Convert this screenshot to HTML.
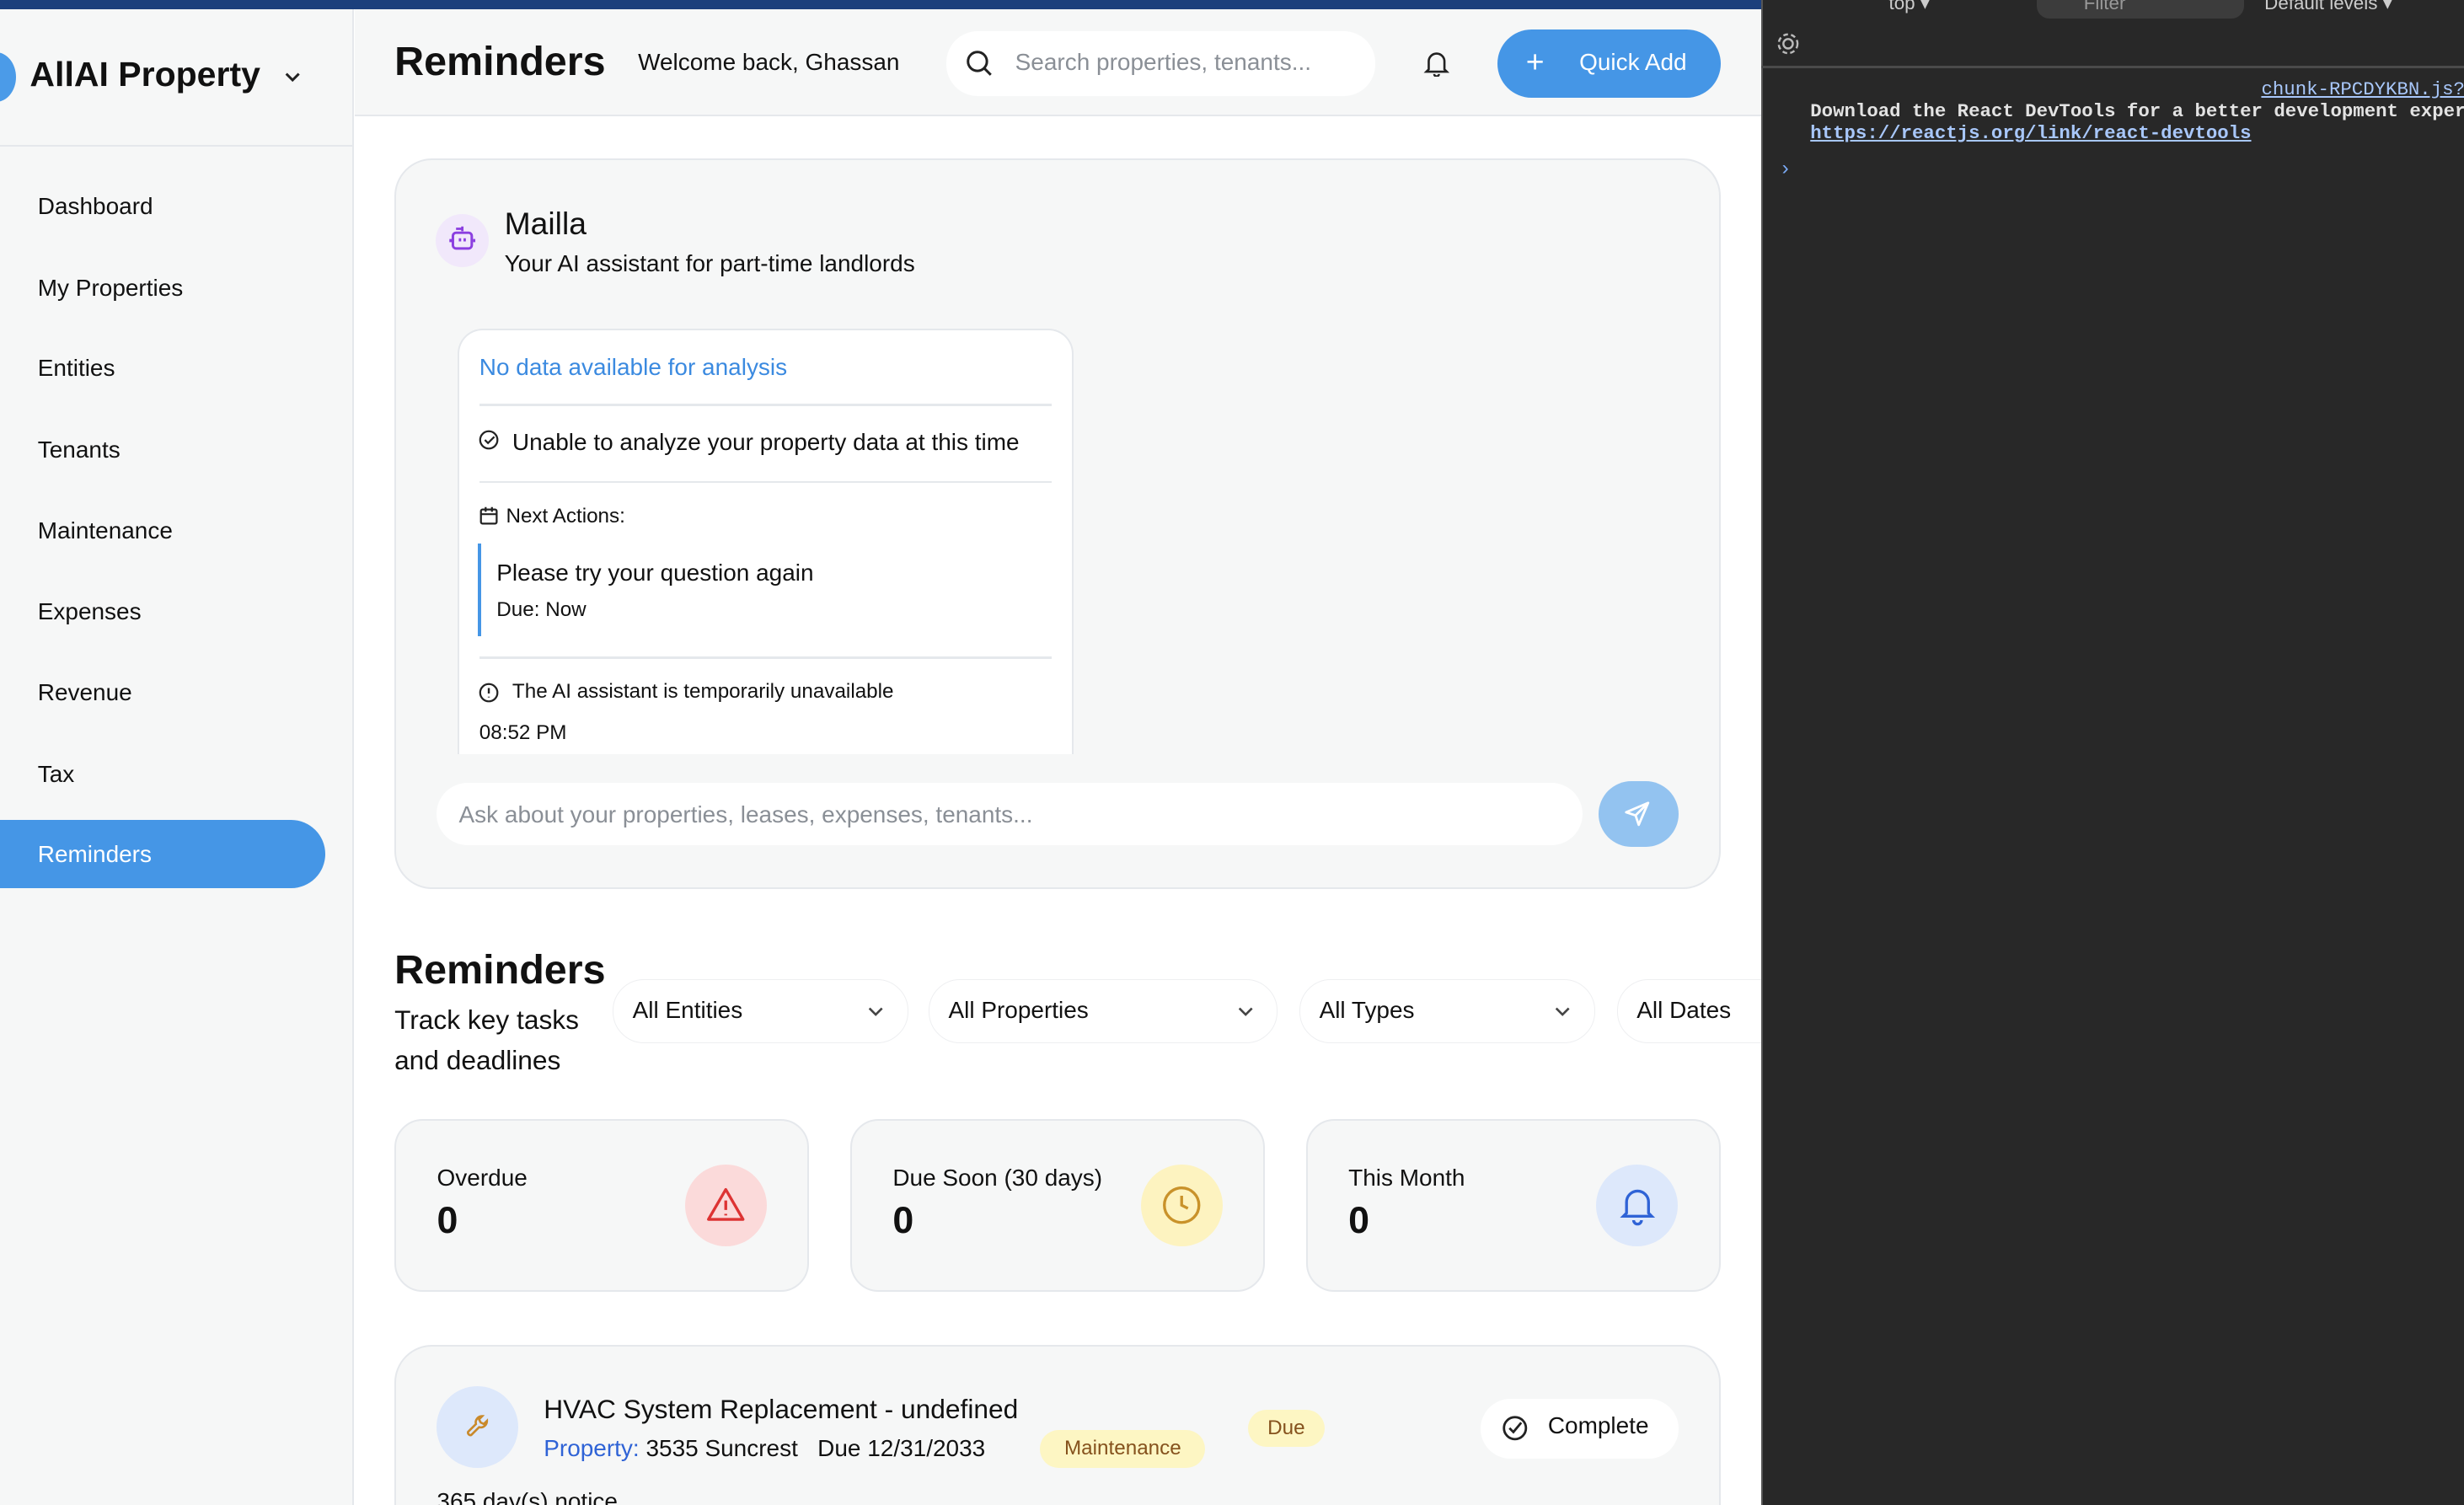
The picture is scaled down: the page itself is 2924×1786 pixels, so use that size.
<!DOCTYPE html>
<html><head><meta charset="utf-8"><style>
*{box-sizing:border-box;margin:0;padding:0}
html,body{width:2924px;height:1786px;overflow:hidden;background:#fff}
#r{zoom:1.8648;width:1568px;height:958px;position:relative;font-family:"Liberation Sans",sans-serif;color:#111;overflow:hidden}
.a{position:absolute}
.card{position:absolute;background:#f6f7f7;border:1.5px solid #e5e8ec}
.nav{position:absolute;left:24px;font-size:15px;color:#111}
.sel{position:absolute;top:623px;height:41px;background:#fff;border:1px solid #eeeff1;border-radius:20px;font-size:15px;padding:11px 12px;color:#111;overflow:hidden}
.sel svg{position:absolute;right:14px;top:15px}
.stat .t{position:absolute;left:26px;top:28px;font-size:15px}
.stat .n{position:absolute;left:26px;top:50px;font-size:24px;font-weight:bold}
.stat .c{position:absolute;right:26px;top:28px;width:52px;height:52px;border-radius:50%}
.mono{font-family:"Liberation Mono",monospace;white-space:nowrap}
</style></head><body><div id="r">
<div class="a" style="left:0;top:0;width:1121px;height:6px;background:#1c3f7c"></div>
<div class="a" style="left:0;top:6px;width:225px;height:952px;background:#f6f7f7;border-right:1.5px solid #e5e8ec"></div>
<div class="a" style="left:0;top:92px;width:224px;height:1.5px;background:#e5e8ec"></div>
<div class="a" style="left:-16px;top:33px;width:26px;height:32px;border-radius:50%;background:#4b9be8"></div>
<div class="a" style="left:19px;top:35px;font-size:22px;font-weight:bold">AllAI Property</div>
<svg class="a" style="left:180px;top:44px" width="12" height="10"><path d="M2 3l4 4 4-4" stroke="#222" stroke-width="1.6" fill="none"/></svg>
<div class="nav" style="top:123px">Dashboard</div>
<div class="nav" style="top:175px">My Properties</div>
<div class="nav" style="top:226px">Entities</div>
<div class="nav" style="top:278px">Tenants</div>
<div class="nav" style="top:329px">Maintenance</div>
<div class="nav" style="top:381px">Expenses</div>
<div class="nav" style="top:432px">Revenue</div>
<div class="nav" style="top:484px">Tax</div>
<div class="a" style="left:0;top:522px;width:207px;height:43px;background:#4596e6;border-radius:0 22px 22px 0"></div>
<div class="nav" style="top:535px;color:#fff">Reminders</div>
<div class="a" style="left:226px;top:6px;width:895px;height:68px;background:#f6f7f7;border-bottom:1.5px solid #e5e8ec"></div>
<div class="a" style="left:251px;top:24px;font-size:26px;font-weight:bold">Reminders</div>
<div class="a" style="left:406px;top:31px;font-size:15px">Welcome back, Ghassan</div>
<div class="a" style="left:602px;top:20px;width:273px;height:41px;background:#fff;border-radius:20px"></div>
<svg class="a" style="left:614px;top:31px" width="18" height="18"><circle cx="8" cy="8" r="6" stroke="#222" stroke-width="1.6" fill="none"/><path d="M12.5 12.5l4 4" stroke="#222" stroke-width="1.6"/></svg>
<div class="a" style="left:646px;top:31px;font-size:15px;color:#8a8f96">Search properties, tenants...</div>
<svg class="a" style="left:905px;top:31px" width="18" height="18"><path d="M4 13V8a5 5 0 0110 0v5l1.5 1.5h-13z M7.5 16a1.5 1.5 0 003 0" stroke="#222" stroke-width="1.4" fill="none"/></svg>
<div class="a" style="left:953px;top:19px;width:142px;height:43px;background:#4596e6;border-radius:22px"></div>
<div class="a" style="left:971px;top:28px;font-size:20px;color:#fff">+</div>
<div class="a" style="left:1005px;top:31px;font-size:15px;color:#fff">Quick Add</div>
<div class="card" style="left:251px;top:101px;width:844px;height:465px;border-radius:24px"></div>
<div class="a" style="left:277px;top:136px;width:34px;height:34px;border-radius:50%;background:#f1e8fb"></div>
<svg class="a" style="left:284px;top:142px" width="20" height="20"><path d="M10 2v3M6 3.5h4" stroke="#8b3fe0" stroke-width="1.5" fill="none"/><rect x="4" y="6" width="12" height="10" rx="2" stroke="#8b3fe0" stroke-width="1.6" fill="none"/><path d="M8.5 9.5v2M11.5 9.5v2M2.5 10v2M17.5 10v2" stroke="#8b3fe0" stroke-width="1.5"/></svg>
<div class="a" style="left:321px;top:131px;font-size:20px">Mailla</div>
<div class="a" style="left:321px;top:159px;font-size:15px">Your AI assistant for part-time landlords</div>
<div class="a" style="left:291px;top:209px;width:392px;height:271px;background:#fff;border:1.5px solid #e5e8ec;border-bottom:none;border-radius:16px 16px 0 0"></div>
<div class="a" style="left:305px;top:225px;font-size:15px;color:#3b8ae0">No data available for analysis</div>
<div class="a" style="left:305px;top:257px;width:364px;height:1.5px;background:#e5e8ec"></div>
<svg class="a" style="left:304px;top:273px" width="14" height="14"><circle cx="7" cy="7" r="5.5" stroke="#222" stroke-width="1.2" fill="none"/><path d="M4.5 7l2 2 4-4" stroke="#222" stroke-width="1.2" fill="none"/></svg>
<div class="a" style="left:326px;top:273px;font-size:15px">Unable to analyze your property data at this time</div>
<div class="a" style="left:305px;top:306px;width:364px;height:1.5px;background:#e5e8ec"></div>
<svg class="a" style="left:304px;top:321px" width="14" height="14"><rect x="2" y="3" width="10" height="9" rx="1" stroke="#222" stroke-width="1.2" fill="none"/><path d="M2 6h10M5 1.5v3M9 1.5v3" stroke="#222" stroke-width="1.2"/></svg>
<div class="a" style="left:322px;top:321px;font-size:13px">Next Actions:</div>
<div class="a" style="left:304px;top:346px;width:2px;height:59px;background:#4596e6"></div>
<div class="a" style="left:316px;top:356px;font-size:15px">Please try your question again</div>
<div class="a" style="left:316px;top:381px;font-size:13px">Due: Now</div>
<div class="a" style="left:305px;top:418px;width:364px;height:1.5px;background:#e5e8ec"></div>
<svg class="a" style="left:304px;top:434px" width="14" height="14"><circle cx="7" cy="7" r="5.5" stroke="#222" stroke-width="1.2" fill="none"/><path d="M7 4v3.5M7 9.5v.5" stroke="#222" stroke-width="1.3"/></svg>
<div class="a" style="left:326px;top:433px;font-size:13px">The AI assistant is temporarily unavailable</div>
<div class="a" style="left:305px;top:459px;font-size:13px">08:52 PM</div>
<div class="a" style="left:278px;top:498px;width:729px;height:40px;background:#fff;border-radius:20px"></div>
<div class="a" style="left:292px;top:510px;font-size:15px;color:#8a8f96">Ask about your properties, leases, expenses, tenants...</div>
<div class="a" style="left:1017px;top:497px;width:51px;height:42px;border-radius:21px;background:#93c3f0"></div>
<svg class="a" style="left:1033px;top:509px" width="18" height="18"><path d="M16 2L2 8l6 2 2 6z M16 2L8 10" stroke="#fff" stroke-width="1.5" fill="none" stroke-linejoin="round"/></svg>
<div class="a" style="left:251px;top:602px;font-size:26px;font-weight:bold">Reminders</div>
<div class="a" style="left:251px;top:636px;font-size:17px;line-height:26px">Track key tasks<br>and deadlines</div>
<div class="sel" style="left:390px;width:188px">All Entities<svg width="12" height="10"><path d="M2 3l4 4 4-4" stroke="#444" stroke-width="1.4" fill="none"/></svg></div>
<div class="sel" style="left:591px;width:222px">All Properties<svg width="12" height="10"><path d="M2 3l4 4 4-4" stroke="#444" stroke-width="1.4" fill="none"/></svg></div>
<div class="sel" style="left:827px;width:188px">All Types<svg width="12" height="10"><path d="M2 3l4 4 4-4" stroke="#444" stroke-width="1.4" fill="none"/></svg></div>
<div class="sel" style="left:1029px;width:120px">All Dates</div>
<div class="card stat" style="left:251px;top:712px;width:264px;height:110px;border-radius:18px"><div class="t">Overdue</div><div class="n">0</div><div class="c" style="background:#fbdada"><svg style="margin:13px" width="26" height="26"><path d="M13 3L2 22h22z" stroke="#d33" stroke-width="1.8" fill="none" stroke-linejoin="round"/><path d="M13 10v6M13 18.5v1" stroke="#d33" stroke-width="1.8"/></svg></div></div>
<div class="card stat" style="left:541px;top:712px;width:264px;height:110px;border-radius:18px"><div class="t">Due Soon (30 days)</div><div class="n">0</div><div class="c" style="background:#fdf3c0"><svg style="margin:13px" width="26" height="26"><circle cx="13" cy="13" r="11" stroke="#c9922a" stroke-width="1.8" fill="none"/><path d="M13 7v6l4 2" stroke="#c9922a" stroke-width="1.8" fill="none"/></svg></div></div>
<div class="card stat" style="left:831px;top:712px;width:264px;height:110px;border-radius:18px"><div class="t">This Month</div><div class="n">0</div><div class="c" style="background:#dde8fb"><svg style="margin:13px" width="26" height="26"><path d="M6 18v-7a7 7 0 0114 0v7l2 2H4z M10.5 22.5a2.5 2.5 0 005 0" stroke="#2f63d6" stroke-width="1.8" fill="none"/></svg></div></div>
<div class="card" style="left:251px;top:856px;width:844px;height:140px;border-radius:24px"></div>
<div class="a" style="left:278px;top:882px;width:52px;height:52px;border-radius:50%;background:#dde8fb"></div>
<svg class="a" style="left:294px;top:898px" width="20" height="20"><path d="M13 3a4 4 0 00-4 5l-5 5a1.6 1.6 0 002 2l5-5a4 4 0 005-4l-2 2-2-1-1-2z" stroke="#c9892a" stroke-width="1.4" fill="none"/></svg>
<div class="a" style="left:346px;top:887px;font-size:17px">HVAC System Replacement - undefined</div>
<div class="a" style="left:346px;top:913px;font-size:15px"><span style="color:#2f63d6">Property:</span> 3535 Suncrest &nbsp;&nbsp;Due 12/31/2033</div>
<div class="a" style="left:662px;top:910px;width:105px;height:24px;border-radius:12px;background:#fdf6c3;font-size:13px;color:#85521d;text-align:center;line-height:24px">Maintenance</div>
<div class="a" style="left:794px;top:897px;width:49px;height:24px;border-radius:12px;background:#fdf6c3;font-size:13px;color:#85521d;text-align:center;line-height:24px">Due</div>
<div class="a" style="left:942px;top:890px;width:126px;height:38px;border-radius:19px;background:#fff"></div>
<svg class="a" style="left:955px;top:900px" width="18" height="18"><circle cx="9" cy="9" r="7" stroke="#222" stroke-width="1.5" fill="none"/><path d="M5.5 9l2.5 2.5 5-6" stroke="#222" stroke-width="1.5" fill="none"/></svg>
<div class="a" style="left:985px;top:899px;font-size:15px">Complete</div>
<div class="a" style="left:278px;top:947px;font-size:15px">365 day(s) notice</div>
<div class="a" style="left:1121px;top:0;width:447px;height:958px;background:#282828;border-left:1.5px solid #555"></div>
<div class="a" style="left:1121px;top:42px;width:447px;height:1.5px;background:#4a4a4a"></div>
<div class="a" style="left:1296px;top:-8px;width:132px;height:20px;border-radius:8px;background:#3c3c3c"></div>
<div class="a" style="left:1202px;top:-5px;font-size:12px;color:#ccc">top ▾</div>
<div class="a" style="left:1326px;top:-5px;font-size:12px;color:#999">Filter</div>
<div class="a" style="left:1441px;top:-5px;font-size:12px;color:#ccc">Default levels ▾</div>
<svg class="a" style="left:1130px;top:20px" width="16" height="16"><circle cx="8" cy="8" r="3" stroke="#bbb" stroke-width="1.3" fill="none"/><circle cx="8" cy="8" r="6" stroke="#bbb" stroke-width="1.3" fill="none" stroke-dasharray="3 2"/></svg>
<div class="a mono" style="left:1439px;top:50px;font-size:12px;color:#a8c7fa;text-decoration:underline">chunk-RPCDYKBN.js?</div>
<div class="a mono" style="left:1152px;top:64px;font-size:12px;color:#e3e3e3;font-weight:bold">Download the React DevTools for a better development experi</div>
<div class="a mono" style="left:1152px;top:78px;font-size:12px;color:#a8c7fa;font-weight:bold;text-decoration:underline">https://reactjs.org/link/react-devtools</div>
<div class="a" style="left:1134px;top:100px;font-size:13px;color:#7cacf8">›</div>
</div></body></html>
